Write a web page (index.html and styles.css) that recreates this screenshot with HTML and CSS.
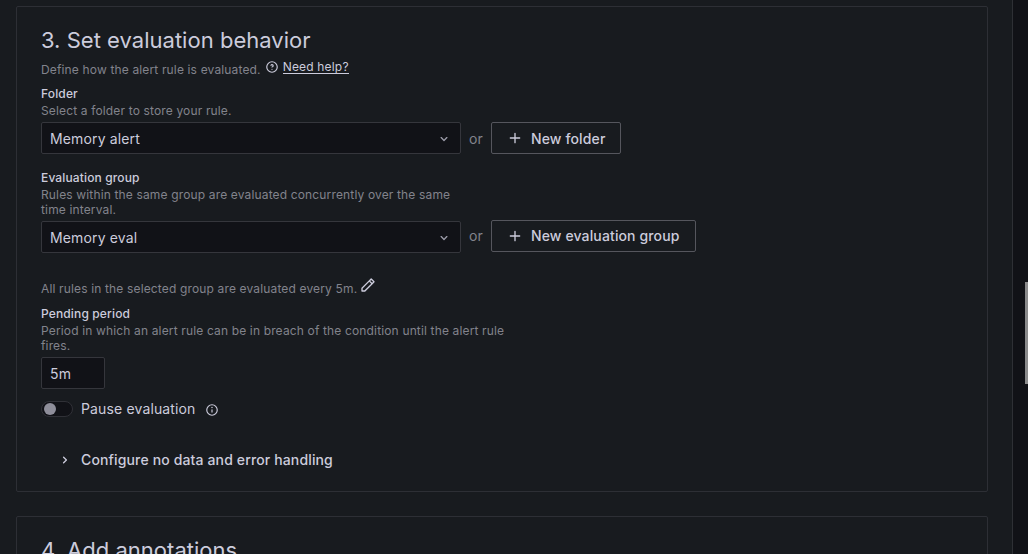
FILE: index.html
```html
<!DOCTYPE html>
<html lang="en">
<head>
<meta charset="utf-8">
<title>Alert rule</title>
<link rel="stylesheet" href="styles.css">
</head>
<body>
<main class="page">
  <section class="step">
    <h3 class="step-title">3. Set evaluation behavior</h3>
    <div class="intro">
      <span class="muted">Define how the alert rule is evaluated.</span>
      <a class="help">
        <svg class="help-icon" viewBox="0 0 24 24" fill="currentColor"><path d="M11.29,15.29a1.58,1.58,0,0,0-.12.15.76.76,0,0,0-.09.18.64.64,0,0,0-.06.18,1.36,1.36,0,0,0,0,.2.84.84,0,0,0,.08.38.9.9,0,0,0,.54.54.94.94,0,0,0,.76,0,.9.9,0,0,0,.54-.54A1,1,0,0,0,13,16a1,1,0,0,0-.29-.71A1,1,0,0,0,11.29,15.29ZM12,2A10,10,0,1,0,22,12,10,10,0,0,0,12,2Zm0,18a8,8,0,1,1,8-8A8,8,0,0,1,12,20ZM12,7A3,3,0,0,0,9.4,8.5a1,1,0,1,0,1.73,1A1,1,0,0,1,12,9a1,1,0,0,1,0,2,1,1,0,1,0,0,2,3,3,0,0,0,0-6Z"/></svg>
        <span class="help-text">Need help?</span>
      </a>
    </div>

    <div class="field folder">
      <label class="label">Folder</label>
      <p class="muted">Select a folder to store your rule.</p>
      <div class="row">
        <div class="control select"><span>Memory alert</span>
          <svg class="chevron" viewBox="0 0 24 24" fill="currentColor"><path d="M17,9.17a1,1,0,0,0-1.41,0L12,12.71,8.46,9.17a1,1,0,0,0-1.41,0,1,1,0,0,0,0,1.42l4.24,4.24a1,1,0,0,0,1.42,0L17,10.59A1,1,0,0,0,17,9.17Z"/></svg>
        </div>
        <span class="or lowered">or</span>
        <button class="button new-folder"><svg class="plus" viewBox="0 0 24 24" fill="currentColor"><path d="M19,11H13V5a1,1,0,0,0-2,0v6H5a1,1,0,0,0,0,2h6v6a1,1,0,0,0,2,0V13h6a1,1,0,0,0,0-2Z"/></svg><span class="lowered">New folder</span></button>
      </div>
    </div>

    <div class="field group">
      <label class="label">Evaluation group</label>
      <p class="muted narrow">Rules within the same group are evaluated concurrently over the same time interval.</p>
      <div class="row">
        <div class="control select"><span>Memory eval</span>
          <svg class="chevron" viewBox="0 0 24 24" fill="currentColor"><path d="M17,9.17a1,1,0,0,0-1.41,0L12,12.71,8.46,9.17a1,1,0,0,0-1.41,0,1,1,0,0,0,0,1.42l4.24,4.24a1,1,0,0,0,1.42,0L17,10.59A1,1,0,0,0,17,9.17Z"/></svg>
        </div>
        <span class="or raised">or</span>
        <button class="button new-group raised"><svg class="plus" viewBox="0 0 24 24" fill="currentColor"><path d="M19,11H13V5a1,1,0,0,0-2,0v6H5a1,1,0,0,0,0,2h6v6a1,1,0,0,0,2,0V13h6a1,1,0,0,0,0-2Z"/></svg><span>New evaluation group</span></button>
      </div>
    </div>

    <div class="interval">
      <span class="muted">All rules in the selected group are evaluated every 5m.</span>
      <svg class="pen" viewBox="0 0 24 24" fill="currentColor"><path d="M22,7.24a1,1,0,0,0-.29-.71L17.47,2.29A1,1,0,0,0,16.76,2a1,1,0,0,0-.71.29L13.22,5.12h0L2.29,16.05a1,1,0,0,0-.29.71V21a1,1,0,0,0,1,1H7.24A1,1,0,0,0,8,21.71L18.87,10.78h0L21.71,8a1.19,1.19,0,0,0,.22-.33,1,1,0,0,0,0-.24.7.7,0,0,0,0-.14ZM6.83,20H4V17.17l9.93-9.93,2.83,2.83ZM18.17,8.66,15.34,5.83l1.42-1.41,2.82,2.82Z"/></svg>
    </div>

    <div class="field pending">
      <label class="label">Pending period</label>
      <p class="muted wide">Period in which an alert rule can be in breach of the condition until the alert rule fires.</p>
      <div class="control duration"><span>5m</span></div>
    </div>

    <div class="pause">
      <span class="switch"><span class="knob"></span></span>
      <span class="pause-text">Pause evaluation</span>
      <svg class="info" viewBox="0 0 24 24" fill="currentColor"><path d="M12,2A10,10,0,1,0,22,12,10.01114,10.01114,0,0,0,12,2Zm0,18a8,8,0,1,1,8-8A8.00917,8.00917,0,0,1,12,20Zm0-9.5a1,1,0,0,0-1,1v4a1,1,0,0,0,2,0v-4A1,1,0,0,0,12,10.5Zm0-4a1.25,1.25,0,1,0,1.25,1.25A1.25,1.25,0,0,0,12,6.5Z"/></svg>
    </div>

    <div class="collapse">
      <svg class="angle" viewBox="0 0 24 24" fill="currentColor"><path d="M14.83,11.29,10.59,7.05a1,1,0,0,0-1.42,0,1,1,0,0,0,0,1.41L12.71,12,9.17,15.54a1,1,0,0,0,0,1.41,1,1,0,0,0,.71.29,1,1,0,0,0,.71-.29l4.24-4.24A1,1,0,0,0,14.83,11.29Z"/></svg>
      <span>Configure no data and error handling</span>
    </div>
  </section>

  <section class="step">
    <h3 class="step-title">4. Add annotations</h3>
  </section>
</main>
<aside class="gutter"><div class="thumb"></div></aside>
</body>
</html>
```
FILE: styles.css
```css
* { box-sizing: border-box; }

body {
  margin: 0;
  height: 554px;
  overflow: hidden;
  display: flex;
  background: #111217;
  color: #ccccdc;
  font: 400 14px/22px Inter, "Liberation Sans", sans-serif;
  letter-spacing: 0.14px;
}

.page {
  width: 1013px;
  height: 554px;
  overflow: hidden;
  padding: 6px 24px 0 16px;
  background: #181b1f;
  border-right: 1px solid #2e3035;
}

.gutter {
  flex: 1;
  display: flex;
  justify-content: flex-end;
  padding-top: 282px;
}

.thumb { width: 3px; height: 102px; background: #8b8b8c; }

.step {
  height: 486px;
  margin-bottom: 24px;
  padding: 19px 24px;
  border: 1px solid #2d2f35;
  border-radius: 2px;
}

.step-title { margin: 0; font-size: 22px; line-height: 28px; font-weight: 400; letter-spacing: 0.02px; }

.muted { margin: 0; color: #82838c; font-size: 12px; line-height: 15px; letter-spacing: 0.15px; }
.narrow { width: 420px; }
.wide { width: 480px; }

.intro { display: flex; align-items: flex-start; height: 32px; padding-top: 8px; }
.help { display: flex; gap: 4px; margin-left: 4px; margin-top: -2px; font-size: 12px; line-height: 14px; letter-spacing: 0.18px; }
.help-icon { width: 14px; height: 14px; }
.help-text { height: 14px; border-bottom: 1px solid #ccccdc; }

.label { display: block; font-size: 12px; line-height: 15px; font-weight: 500; margin-bottom: 2px; }

.folder { height: 84px; }
.group { height: 111px; }

.row { display: flex; align-items: center; margin-top: 4px; }

.control {
  display: flex;
  align-items: center;
  height: 32px;
  padding: 0 8px;
  background: #111217;
  border: 1px solid #35363c;
  border-radius: 2px;
}
.control span { padding-top: 2px; }
.select { width: 420px; justify-content: space-between; }
.chevron { width: 16px; height: 16px; margin-top: 1px; color: #9b9ba8; }
.duration { width: 64px; margin-top: 4px; }

.or { width: 30px; text-align: center; color: #82838c; }
.raised { position: relative; top: -1px; }
.lowered { padding-top: 2px; }

.button {
  display: flex;
  align-items: center;
  height: 32px;
  padding: 0 0 0 15px;
  background: transparent;
  border: 1px solid #55565d;
  border-radius: 2px;
  color: #ccccdc;
  font: inherit;
  font-weight: 500;
  letter-spacing: 0.13px;
  white-space: nowrap;
}
.new-folder { width: 130px; }
.new-group { width: 205px; }
.plus { width: 16px; height: 16px; margin-right: 8px; }

.interval { display: flex; align-items: flex-start; height: 25px; }
.pen { width: 16px; height: 16px; margin-left: 3px; margin-top: -4px; }

.pending { height: 92px; }

.pause { display: flex; align-items: center; height: 22px; }
.switch { width: 32px; height: 16px; padding: 1px; background: #111217; border: 1px solid #303137; border-radius: 8px; }
.knob { display: block; width: 12px; height: 12px; margin-left: 1px; border-radius: 50%; background: #8e8e9a; }
.pause-text { margin-left: 8px; }
.info { width: 14px; height: 14px; margin-left: 9px; margin-top: 1px; }

.collapse { display: flex; align-items: center; margin-top: 29px; padding-left: 16px; font-weight: 500; letter-spacing: 0.14px; }
.angle { width: 16px; height: 16px; margin-right: 8px; margin-top: -1px; }
```
